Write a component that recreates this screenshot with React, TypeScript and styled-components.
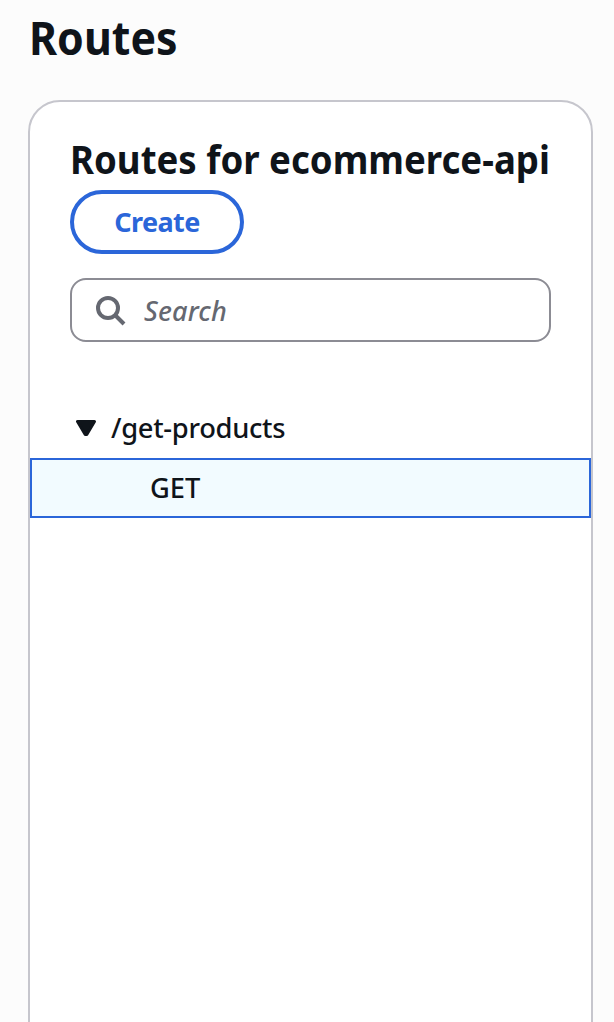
import React from "react";
import styled, { createGlobalStyle } from "styled-components";

const GlobalStyle = createGlobalStyle`
  * { box-sizing: border-box; }
  body { margin: 0; background: #fcfcfc; color: #0f141a; font-family: "Noto Sans", sans-serif; }
`;

const Page = styled.main`
  display: flex;
  flex-direction: column;
  height: 1022px;
  padding: 9px 21px 0 28px;
  overflow: hidden;
`;

const Title = styled.h1`
  margin: 0 0 35px 1px;
  height: 56px;
  font: 700 46px/56px "Noto Sans", sans-serif;
  white-space: nowrap;
  transform: scaleX(0.932);
  transform-origin: left;
`;

const Panel = styled.section`
  display: flex;
  flex-direction: column;
  height: 960px;
  flex-shrink: 0;
  border: 2px solid #c6c6cd;
  border-radius: 32px;
  background: #fff;
`;

const PanelHeader = styled.header`
  padding: 33px 40px 0;
`;

const PanelTitle = styled.h2`
  margin: 0;
  height: 55px;
  font: 700 39px/48px "Noto Sans", sans-serif;
  white-space: nowrap;
  transform: scaleX(0.938);
  transform-origin: left;
`;

const CreateButton = styled.button`
  display: flex;
  align-items: center;
  justify-content: center;
  width: 174px;
  height: 64px;
  padding: 0;
  border: 4px solid #2b66d9;
  border-radius: 32px;
  background: #fff;
  color: #2b66d9;
  font: 700 27px/36px "Noto Sans", sans-serif;
  letter-spacing: -0.6px;
`;

const SearchField = styled.label`
  display: flex;
  align-items: center;
  gap: 18px;
  height: 64px;
  margin: 24px 40px 0;
  padding: 1px 0 0 24px;
  border: 2px solid #8c8c94;
  border-radius: 16px;
  color: #656871;
  font: italic 500 27px/36px "Noto Sans", sans-serif;
  letter-spacing: 0.15px;
`;

const Tree = styled.div`
  display: flex;
  flex-direction: column;
  margin-top: 56px;
  font: 500 27.3px/36px "Noto Sans", sans-serif;
`;

const RouteRow = styled.div`
  display: flex;
  align-items: center;
  gap: 15px;
  height: 60px;
  padding-left: 46px;
  letter-spacing: -0.3px;
`;

const MethodRow = styled.div`
  display: flex;
  align-items: center;
  height: 60px;
  padding-left: 118px;
  border: 2px solid #2b66d9;
  background: #f2fbff;
`;

export default function App() {
  return (
    <>
      <GlobalStyle />
      <Page>
        <Title>Routes</Title>
        <Panel>
          <PanelHeader>
            <PanelTitle>Routes for ecommerce-api</PanelTitle>
            <CreateButton>Create</CreateButton>
          </PanelHeader>
          <SearchField>
            <svg width="30" height="30" viewBox="0 0 30 30" fill="none" stroke="#656871" strokeWidth="4">
              <circle cx="12" cy="12" r="10" />
              <path d="M19 19 L28 28" />
            </svg>
            Search
          </SearchField>
          <Tree>
            <RouteRow>
              <svg width="20" height="16" viewBox="0 0 20 16">
                <path d="M1.5 1.5H18.5L10.8 14.5H9.2Z" fill="#0f141a" stroke="#0f141a" strokeWidth="3" strokeLinejoin="round" />
              </svg>
              /get-products
            </RouteRow>
            <MethodRow>GET</MethodRow>
          </Tree>
        </Panel>
      </Page>
    </>
  );
}
